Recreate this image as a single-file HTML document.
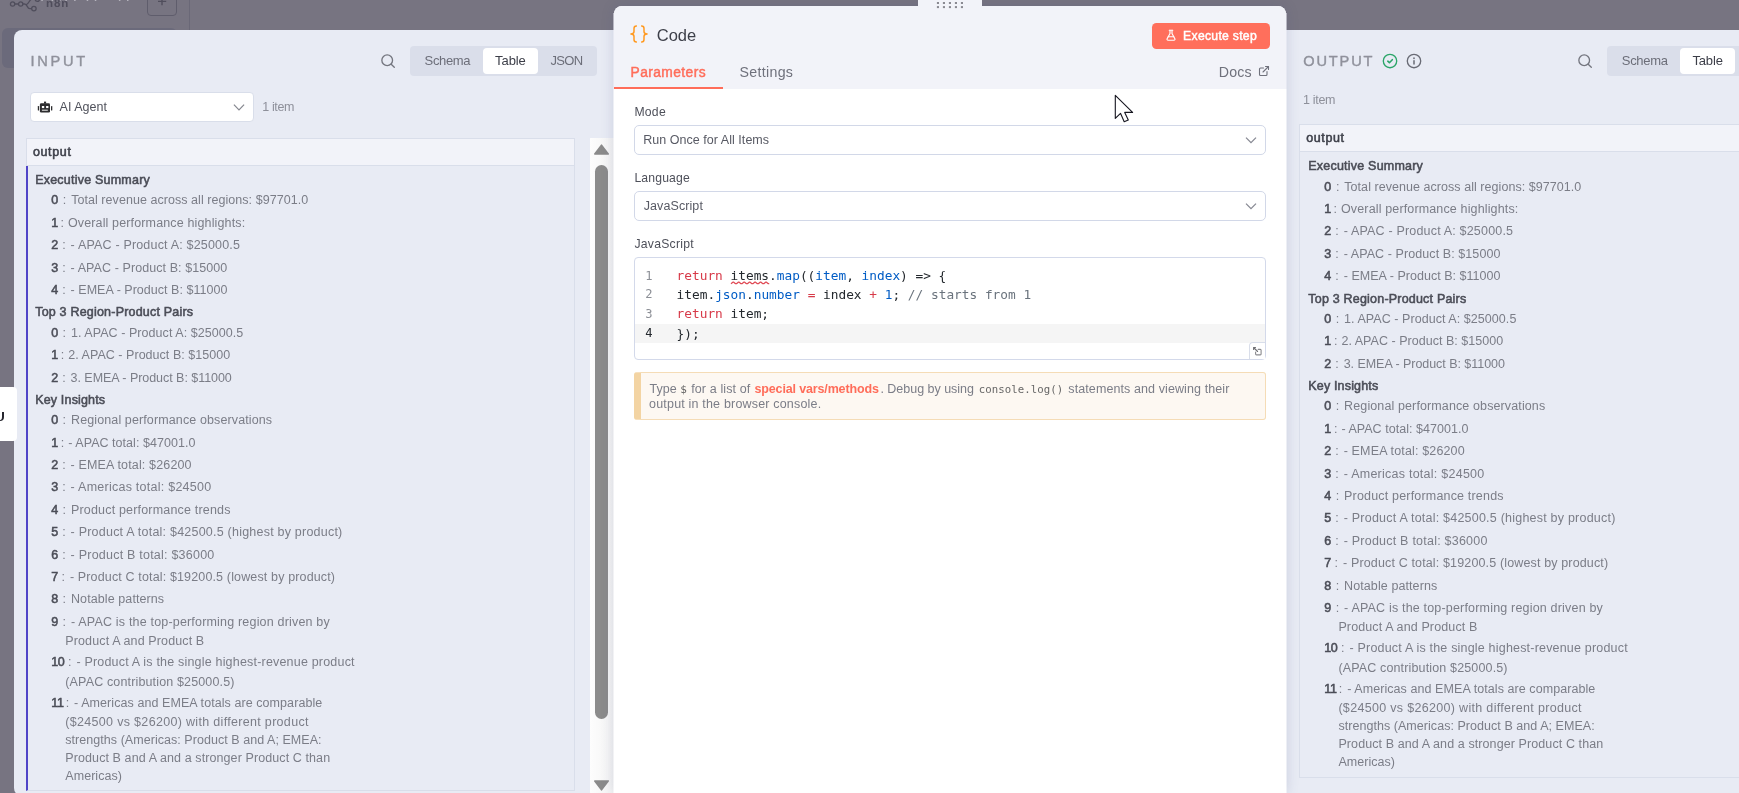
<!DOCTYPE html>
<html lang="en">
<head>
<meta charset="utf-8">
<title>n8n - Code node</title>
<style>
*{box-sizing:border-box;margin:0;padding:0}
html,body{width:1739px;height:793px;overflow:hidden}
body{background:#777481;position:relative;font-family:"Liberation Sans",sans-serif}
.a{position:absolute}
.t{position:absolute;white-space:pre}
svg{position:absolute;overflow:visible}
/* background remnants */
#sideitem{left:2px;top:28px;width:175px;height:40px;background:#6b6a7b;border-radius:6px}
#vline{left:189px;top:0;width:1px;height:30px;background:#6a6877}
#plus{left:147px;top:-10px;width:30px;height:25.5px;border:1px solid #5f5d6c;border-radius:4px}
/* panels */
#inp{left:14px;top:30px;width:620px;height:766px;background:#e8ebf4;border-radius:8px 0 0 8px}
#outp{left:1280px;top:30px;width:459px;height:763px;background:#e8ebf4}
#main{left:614px;top:6px;width:672px;height:787px;background:#fff;border-radius:8px 8px 0 0;box-shadow:0 0 13px rgba(70,80,130,.2);overflow:hidden}
#mainhead{left:0;top:0;width:100%;height:82.5px;background:#f2f3f9}
#handle{left:918px;top:0;width:64px;height:10px;background:#f2f3f9}
#uline{left:614px;top:86.7px;width:109px;height:2.2px;background:#ff6d5a}
#texts{left:0;top:0;width:1739px;height:793px;will-change:transform}
.tabs{background:#dadeea;border-radius:4px}
.tabon{background:#fff;border-radius:4px}
.sel{background:#fff;border:1px solid #d9deea;border-radius:4px}
.sel2{background:#fff;border:1px solid #d2d8e8;border-radius:5px}
.th{background:#f2f3f9;border:1px solid #d9deea}
.tb{border:1px solid #d9deea;border-top:none}
#btn{left:1152px;top:23px;width:118px;height:26px;background:#ff6f5c;border-radius:4.5px}
#hint{left:634px;top:371.7px;width:632px;height:48px;background:#fdf8f2;border:1px solid #f5dcb6;border-left:7px solid #f3d4a3;border-radius:3px}
#editor{left:634px;top:257px;width:632px;height:102.5px;background:#fff;border:1px solid #d3d9ea;border-radius:4px;overflow:hidden}
#activeline{left:0;top:66.3px;width:100%;height:18.6px;background:#f5f5f5}
</style>
</head>
<body>
<!-- dimmed canvas remnants -->
<div class="a" id="sideitem"></div>
<div class="a" id="vline"></div>
<div class="a" id="plus"></div>

<!-- INPUT panel -->
<div class="a" id="inp"></div>
<div class="a tabs" style="left:410px;top:46px;width:187px;height:29.7px"></div>
<div class="a tabon" style="left:483.1px;top:48.2px;width:54.8px;height:25.6px"></div>
<div class="a sel" style="left:30px;top:92px;width:224px;height:29.5px"></div>
<div class="a th" style="left:26px;top:138.2px;width:549px;height:27.5px"></div>
<div class="a tb" style="left:26px;top:165.7px;width:549px;height:625px;border-left:2.4px solid #5045c8"></div>
<!-- scrollbar -->
<div class="a" style="left:590px;top:138px;width:24px;height:655px;background:linear-gradient(90deg,#fdfdfd,#f3f3f3)"></div>
<div class="a" style="left:595px;top:164.8px;width:13px;height:554px;background:#8b8b8b;border-radius:6.5px"></div>
<svg style="left:593px;top:144px" width="17" height="12" viewBox="0 0 17 12"><path d="M8.5 1.2 L15.2 10 L1.8 10 Z" fill="#8b8b8b" stroke="#8b8b8b" stroke-width="1.6" stroke-linejoin="round"/></svg>
<svg style="left:593px;top:779px" width="17" height="12" viewBox="0 0 17 12"><path d="M8.5 10.8 L15.2 2 L1.8 2 Z" fill="#8b8b8b" stroke="#8b8b8b" stroke-width="1.6" stroke-linejoin="round"/></svg>

<!-- left edge tab (over input panel) -->
<div class="a" style="left:-4px;top:386.6px;width:21px;height:54px;background:#fff;border-radius:0 4px 4px 0"></div>
<div class="a" style="left:-2.6px;top:411.6px;width:6.6px;height:9.2px;border-right:2.4px solid #26262e;border-bottom:1.8px solid #26262e;border-radius:0 0 4px 0"></div>
<!-- OUTPUT panel -->
<div class="a" id="outp"></div>
<div class="a tabs" style="left:1607px;top:46px;width:187px;height:29.7px"></div>
<div class="a tabon" style="left:1680.1px;top:48.2px;width:54.8px;height:25.6px"></div>
<div class="a th" style="left:1299px;top:124px;width:460px;height:27.5px"></div>
<div class="a tb" style="left:1299px;top:151.5px;width:460px;height:626px"></div>

<!-- MAIN panel -->
<div class="a" id="main"><div class="a" id="mainhead"></div></div>
<div class="a" id="handle"></div>
<div class="a" style="left:613px;top:13px;width:1px;height:76px;background:rgba(242,243,249,.55)"></div>
<div class="a" style="left:613px;top:89px;width:1px;height:704px;background:rgba(255,255,255,.55)"></div>
<div class="a" style="left:1286px;top:13px;width:1px;height:76px;background:rgba(242,243,249,.55)"></div>
<div class="a" style="left:1286px;top:89px;width:1px;height:704px;background:rgba(255,255,255,.55)"></div>
<div class="a" id="uline"></div>
<div class="a" id="btn"></div>
<div class="a sel2" style="left:634px;top:125px;width:632px;height:29.6px"></div>
<div class="a sel2" style="left:634px;top:191px;width:632px;height:29.6px"></div>
<div class="a" id="editor"><div class="a" id="activeline"></div></div>
<div class="a" id="hint"></div>

<!-- n8n logo remnants + plus button -->
<svg style="left:0;top:0" width="200" height="16" viewBox="0 0 200 16"><g fill="none" stroke="#504e5c" stroke-width="1.3"><circle cx="12.600" cy="4" r="2.150"/><circle cx="20.700" cy="4" r="2.150"/><circle cx="33.900" cy="8.600" r="2.250"/><circle cx="37.400" cy="-.9" r="2.250"/><path d="M14.800 4h3.700M22.900 4h1.600c3.200 0 2.300 4.600 5.300 4.600h1.800M26.600 4.400c2.600-.6 2.600-5.300 5.600-5.300h3"/></g><path d="M162 -2v7.200M158 1.400h8.200" stroke="#504e5c" stroke-width="1.4" fill="none"/><g fill="#cfced6"><rect x="41.3" y="-.4" width="1.500" height="1.100"/><rect x="51.6" y="-.4" width="1.500" height="1.100"/><rect x="59.1" y="-.4" width="1.500" height="1.100"/><rect x="65.4" y="-.4" width="1.500" height="1.100"/><rect x="74.1" y="-.4" width="1.500" height="1.100"/><rect x="86.7" y="-.4" width="1.500" height="1.100"/><rect x="94.8" y="-.4" width="1.500" height="1.100"/><rect x="118.9" y="-.4" width="1.500" height="1.100"/><rect x="127.0" y="-.4" width="1.500" height="1.100"/></g></svg>
<!-- search icons -->
<svg style="left:380px;top:53px" width="17" height="17" viewBox="0 0 17 17"><g fill="none" stroke="#74767f" stroke-width="1.35" stroke-linecap="round"><circle cx="7.2" cy="7.2" r="5.35"/><path d="M11.2 11.2l3.1 3"/></g></svg>
<svg style="left:1577.2px;top:53.1px" width="17" height="17" viewBox="0 0 17 17"><g fill="none" stroke="#74767f" stroke-width="1.35" stroke-linecap="round"><circle cx="7.2" cy="7.2" r="5.35"/><path d="M11.2 11.2l3.1 3"/></g></svg>
<!-- robot -->
<svg style="left:37px;top:101px" width="16" height="13" viewBox="0 0 16 13"><g fill="#2d2d2f"><rect x="2.9" y="2.2" width="10.1" height="9.4" rx="1.3"/><rect x="7" y=".6" width="2.1" height="2"/><rect x=".8" y="5" width="1.3" height="4.6" rx=".6"/><rect x="14" y="5" width="1.3" height="4.6" rx=".6"/></g><g fill="#fff"><rect x="4.9" y="5" width="2.3" height="2.1"/><rect x="9.1" y="5" width="2.3" height="2.1"/><rect x="4.9" y="8.6" width="5.9" height="1.3" fill="#c4c4c4"/></g></svg>
<!-- chevrons -->
<svg style="left:233px;top:103px" width="12" height="8" viewBox="0 0 12 8"><path d="M.9 1.7l5.1 5.1 5.1-5.1" fill="none" stroke="#85878f" stroke-width="1.2"/></svg>
<svg style="left:1245px;top:136px" width="12" height="8" viewBox="0 0 12 8"><path d="M1 1.6l5 5.1 5-5.1" fill="none" stroke="#878993" stroke-width="1.25"/></svg>
<svg style="left:1245px;top:201.7px" width="12" height="8" viewBox="0 0 12 8"><path d="M1 1.6l5 5.1 5-5.1" fill="none" stroke="#878993" stroke-width="1.25"/></svg>
<!-- braces -->
<svg style="left:630px;top:25px" width="18" height="18" viewBox="0 0 18 18"><g fill="none" stroke="#ff9a22" stroke-width="1.5" stroke-linecap="butt" stroke-linejoin="round"><path d="M6.900 .9H6.400Q4 .9 4 3.400V6.600Q4 9 .9 9Q4 9 4 11.400V14.600Q4 17.100 6.400 17.100H6.900"/><path d="M11.100 .9H11.600Q14 .9 14 3.400V6.600Q14 9 17.100 9Q14 9 14 11.400V14.600Q14 17.100 11.600 17.100H11.100"/></g></svg>
<!-- flask -->
<svg style="left:1164.7px;top:29.4px" width="12" height="12.500" viewBox="0 0 24 24"><g fill="none" stroke="#fff" stroke-width="2.3" stroke-linecap="round" stroke-linejoin="round"><path d="M14 2v6a2 2 0 0 0 .245.960l5.510 10.080A2 2 0 0 1 18 22H6a2 2 0 0 1-1.755-2.960l5.510-10.080A2 2 0 0 0 10 8V2"/><path d="M6.453 15h11.094"/><path d="M8.500 2h7"/></g></svg>
<!-- external link -->
<svg style="left:1258px;top:65px" width="12" height="12" viewBox="0 0 24 24"><g fill="none" stroke="#6f717c" stroke-width="2.2" stroke-linecap="round" stroke-linejoin="round"><path d="M15 3h6v6"/><path d="M10 14 21 3"/><path d="M18 13v6a2 2 0 0 1-2 2H5a2 2 0 0 1-2-2V8a2 2 0 0 1 2-2h6"/></g></svg>
<!-- check + info -->
<svg style="left:1381.800px;top:53px" width="16" height="16" viewBox="0 0 16 16"><g fill="none" stroke="#2aa568" stroke-width="1.35" stroke-linecap="round" stroke-linejoin="round"><circle cx="8" cy="8" r="6.7"/><path d="M5.800 8.200l1.600 1.500 2.900-3" stroke-width="1.600"/></g></svg>
<svg style="left:1405.800px;top:53px" width="16" height="16" viewBox="0 0 16 16"><g fill="none" stroke="#696b75" stroke-width="1.35" stroke-linecap="round"><circle cx="8" cy="8" r="6.7"/><path d="M8 7.700v3.300" stroke-width="1.500"/><path d="M8 5.200v.1" stroke-width="1.700"/></g></svg>
<!-- editor corner button -->
<div class="a" style="left:1248.800px;top:342.300px;width:16.500px;height:16.500px;background:#fff;border:1px solid #d9deea;border-right:none;border-bottom:none;border-radius:4px 0 0 0"></div>
<svg style="left:1252px;top:346px" width="11" height="11" viewBox="0 0 11 11"><g fill="none" stroke="#8a8a8e" stroke-width="1.100" stroke-linecap="round" stroke-linejoin="round"><path d="M6.200 3.400h2.100a.8.800 0 0 1 .8.800v3.900a.8.800 0 0 1-.8.800H4.400a.8.800 0 0 1-.8-.8V6"/><path d="M1.600 1.500l4 4M1.600 3.400V1.500h1.900" stroke="#707074"/></g></svg>
<!-- drag handle dots -->
<svg style="left:936px;top:1px" width="30" height="8" viewBox="0 0 30 8"><g fill="#8a8a92"><rect x=".9" y="1" width="2.100" height="2"/><rect x="6.900" y="1" width="2.100" height="2"/><rect x="12.900" y="1" width="2.100" height="2"/><rect x="18.900" y="1" width="2.100" height="2"/><rect x="24.900" y="1" width="2.100" height="2"/><rect x=".9" y="5.100" width="2.100" height="2"/><rect x="6.900" y="5.100" width="2.100" height="2"/><rect x="12.900" y="5.100" width="2.100" height="2"/><rect x="18.900" y="5.100" width="2.100" height="2"/><rect x="24.900" y="5.100" width="2.100" height="2"/></g></svg>
<!-- mouse cursor -->
<svg style="left:1113.300px;top:93.300px" width="24" height="32" viewBox="0 0 24 32"><path d="M2.300 2.300V25.400L7.500 20.300 11.200 28.700 15.300 27 11.700 19.400 19.600 19.400Z" fill="#fff" stroke="#15151f" stroke-width="1.100" stroke-linejoin="round"/></svg>
<!-- lint squiggle -->
<svg style="left:0;top:0" width="1739" height="793"><path d="M731 283.7 l1.82 -1.5 l0.91 0 l1.82 1.5 l0.91 0 l1.82 -1.5 l0.91 0 l1.82 1.5 l0.91 0 l1.82 -1.5 l0.91 0 l1.82 1.5 l0.91 0 l1.82 -1.5 l0.91 0 l1.82 1.5 l0.91 0 l1.82 -1.5 l0.91 0 l1.82 1.5 l0.91 0 l1.82 -1.5 l0.91 0 l1.82 1.5 l0.91 0 l1.82 -1.5 l0.91 0 l1.82 1.5 l0.91 0" fill="none" stroke="#e04a55" stroke-width="1.25" stroke-linejoin="round"/></svg>

<div class="a" id="texts">
<div class="t" style="left:35.20px;top:172.77px;font:400 12.5px/15px 'Liberation Sans',sans-serif;color:#4b4d57;letter-spacing:0.214px;-webkit-text-stroke:.55px #4b4d57;">Executive Summary</div>
<div class="t" style="left:51.20px;top:192.77px;font:400 12.5px/15px 'Liberation Sans',sans-serif;color:#4b4d57;-webkit-text-stroke:.55px #4b4d57;">0</div>
<div class="t" style="left:62.80px;top:192.77px;font:400 12.5px/15px 'Liberation Sans',sans-serif;color:#7b7d87;">:</div>
<div class="t" style="left:71.20px;top:192.77px;font:400 12.5px/15px 'Liberation Sans',sans-serif;color:#7b7d87;letter-spacing:0.051px;">Total revenue across all regions: $97701.0</div>
<div class="t" style="left:51.20px;top:215.77px;font:400 12.5px/15px 'Liberation Sans',sans-serif;color:#4b4d57;-webkit-text-stroke:.55px #4b4d57;">1</div>
<div class="t" style="left:60.40px;top:215.77px;font:400 12.5px/15px 'Liberation Sans',sans-serif;color:#7b7d87;">:</div>
<div class="t" style="left:67.90px;top:215.77px;font:400 12.5px/15px 'Liberation Sans',sans-serif;color:#7b7d87;letter-spacing:0.142px;">Overall performance highlights:</div>
<div class="t" style="left:51.20px;top:237.77px;font:400 12.5px/15px 'Liberation Sans',sans-serif;color:#4b4d57;-webkit-text-stroke:.55px #4b4d57;">2</div>
<div class="t" style="left:62.20px;top:237.77px;font:400 12.5px/15px 'Liberation Sans',sans-serif;color:#7b7d87;">:</div>
<div class="t" style="left:70.60px;top:237.77px;font:400 12.5px/15px 'Liberation Sans',sans-serif;color:#7b7d87;letter-spacing:0.180px;">- APAC - Product A: $25000.5</div>
<div class="t" style="left:51.20px;top:260.77px;font:400 12.5px/15px 'Liberation Sans',sans-serif;color:#4b4d57;-webkit-text-stroke:.55px #4b4d57;">3</div>
<div class="t" style="left:62.20px;top:260.77px;font:400 12.5px/15px 'Liberation Sans',sans-serif;color:#7b7d87;">:</div>
<div class="t" style="left:70.60px;top:260.77px;font:400 12.5px/15px 'Liberation Sans',sans-serif;color:#7b7d87;letter-spacing:0.080px;">- APAC - Product B: $15000</div>
<div class="t" style="left:51.20px;top:282.77px;font:400 12.5px/15px 'Liberation Sans',sans-serif;color:#4b4d57;-webkit-text-stroke:.55px #4b4d57;">4</div>
<div class="t" style="left:62.20px;top:282.77px;font:400 12.5px/15px 'Liberation Sans',sans-serif;color:#7b7d87;">:</div>
<div class="t" style="left:70.60px;top:282.77px;font:400 12.5px/15px 'Liberation Sans',sans-serif;color:#7b7d87;letter-spacing:0.027px;">- EMEA - Product B: $11000</div>
<div class="t" style="left:35.20px;top:304.77px;font:400 12.5px/15px 'Liberation Sans',sans-serif;color:#4b4d57;letter-spacing:0.202px;-webkit-text-stroke:.55px #4b4d57;">Top 3 Region-Product Pairs</div>
<div class="t" style="left:51.20px;top:325.77px;font:400 12.5px/15px 'Liberation Sans',sans-serif;color:#4b4d57;-webkit-text-stroke:.55px #4b4d57;">0</div>
<div class="t" style="left:62.60px;top:325.77px;font:400 12.5px/15px 'Liberation Sans',sans-serif;color:#7b7d87;">:</div>
<div class="t" style="left:71.00px;top:325.77px;font:400 12.5px/15px 'Liberation Sans',sans-serif;color:#7b7d87;letter-spacing:0.055px;">1. APAC - Product A: $25000.5</div>
<div class="t" style="left:51.20px;top:347.77px;font:400 12.5px/15px 'Liberation Sans',sans-serif;color:#4b4d57;-webkit-text-stroke:.55px #4b4d57;">1</div>
<div class="t" style="left:60.80px;top:347.77px;font:400 12.5px/15px 'Liberation Sans',sans-serif;color:#7b7d87;">:</div>
<div class="t" style="left:68.30px;top:347.77px;font:400 12.5px/15px 'Liberation Sans',sans-serif;color:#7b7d87;letter-spacing:0.034px;">2. APAC - Product B: $15000</div>
<div class="t" style="left:51.20px;top:370.77px;font:400 12.5px/15px 'Liberation Sans',sans-serif;color:#4b4d57;-webkit-text-stroke:.55px #4b4d57;">2</div>
<div class="t" style="left:62.20px;top:370.77px;font:400 12.5px/15px 'Liberation Sans',sans-serif;color:#7b7d87;">:</div>
<div class="t" style="left:70.60px;top:370.77px;font:400 12.5px/15px 'Liberation Sans',sans-serif;color:#7b7d87;letter-spacing:-0.044px;">3. EMEA - Product B: $11000</div>
<div class="t" style="left:35.20px;top:392.77px;font:400 12.5px/15px 'Liberation Sans',sans-serif;color:#4b4d57;letter-spacing:0.167px;-webkit-text-stroke:.55px #4b4d57;">Key Insights</div>
<div class="t" style="left:51.20px;top:412.77px;font:400 12.5px/15px 'Liberation Sans',sans-serif;color:#4b4d57;-webkit-text-stroke:.55px #4b4d57;">0</div>
<div class="t" style="left:62.60px;top:412.77px;font:400 12.5px/15px 'Liberation Sans',sans-serif;color:#7b7d87;">:</div>
<div class="t" style="left:71.00px;top:412.77px;font:400 12.5px/15px 'Liberation Sans',sans-serif;color:#7b7d87;letter-spacing:0.117px;">Regional performance observations</div>
<div class="t" style="left:51.20px;top:435.77px;font:400 12.5px/15px 'Liberation Sans',sans-serif;color:#4b4d57;-webkit-text-stroke:.55px #4b4d57;">1</div>
<div class="t" style="left:60.80px;top:435.77px;font:400 12.5px/15px 'Liberation Sans',sans-serif;color:#7b7d87;">:</div>
<div class="t" style="left:68.30px;top:435.77px;font:400 12.5px/15px 'Liberation Sans',sans-serif;color:#7b7d87;letter-spacing:0.039px;">- APAC total: $47001.0</div>
<div class="t" style="left:51.20px;top:457.77px;font:400 12.5px/15px 'Liberation Sans',sans-serif;color:#4b4d57;-webkit-text-stroke:.55px #4b4d57;">2</div>
<div class="t" style="left:62.20px;top:457.77px;font:400 12.5px/15px 'Liberation Sans',sans-serif;color:#7b7d87;">:</div>
<div class="t" style="left:70.60px;top:457.77px;font:400 12.5px/15px 'Liberation Sans',sans-serif;color:#7b7d87;letter-spacing:0.148px;">- EMEA total: $26200</div>
<div class="t" style="left:51.20px;top:479.77px;font:400 12.5px/15px 'Liberation Sans',sans-serif;color:#4b4d57;-webkit-text-stroke:.55px #4b4d57;">3</div>
<div class="t" style="left:62.20px;top:479.77px;font:400 12.5px/15px 'Liberation Sans',sans-serif;color:#7b7d87;">:</div>
<div class="t" style="left:70.60px;top:479.77px;font:400 12.5px/15px 'Liberation Sans',sans-serif;color:#7b7d87;letter-spacing:0.250px;">- Americas total: $24500</div>
<div class="t" style="left:51.20px;top:502.77px;font:400 12.5px/15px 'Liberation Sans',sans-serif;color:#4b4d57;-webkit-text-stroke:.55px #4b4d57;">4</div>
<div class="t" style="left:62.60px;top:502.77px;font:400 12.5px/15px 'Liberation Sans',sans-serif;color:#7b7d87;">:</div>
<div class="t" style="left:71.00px;top:502.77px;font:400 12.5px/15px 'Liberation Sans',sans-serif;color:#7b7d87;letter-spacing:0.179px;">Product performance trends</div>
<div class="t" style="left:51.20px;top:524.77px;font:400 12.5px/15px 'Liberation Sans',sans-serif;color:#4b4d57;-webkit-text-stroke:.55px #4b4d57;">5</div>
<div class="t" style="left:62.20px;top:524.77px;font:400 12.5px/15px 'Liberation Sans',sans-serif;color:#7b7d87;">:</div>
<div class="t" style="left:70.60px;top:524.77px;font:400 12.5px/15px 'Liberation Sans',sans-serif;color:#7b7d87;letter-spacing:0.221px;">- Product A total: $42500.5 (highest by product)</div>
<div class="t" style="left:51.20px;top:547.77px;font:400 12.5px/15px 'Liberation Sans',sans-serif;color:#4b4d57;-webkit-text-stroke:.55px #4b4d57;">6</div>
<div class="t" style="left:62.20px;top:547.77px;font:400 12.5px/15px 'Liberation Sans',sans-serif;color:#7b7d87;">:</div>
<div class="t" style="left:70.60px;top:547.77px;font:400 12.5px/15px 'Liberation Sans',sans-serif;color:#7b7d87;letter-spacing:0.225px;">- Product B total: $36000</div>
<div class="t" style="left:51.20px;top:569.77px;font:400 12.5px/15px 'Liberation Sans',sans-serif;color:#4b4d57;-webkit-text-stroke:.55px #4b4d57;">7</div>
<div class="t" style="left:61.50px;top:569.77px;font:400 12.5px/15px 'Liberation Sans',sans-serif;color:#7b7d87;">:</div>
<div class="t" style="left:69.90px;top:569.77px;font:400 12.5px/15px 'Liberation Sans',sans-serif;color:#7b7d87;letter-spacing:0.145px;">- Product C total: $19200.5 (lowest by product)</div>
<div class="t" style="left:51.20px;top:591.77px;font:400 12.5px/15px 'Liberation Sans',sans-serif;color:#4b4d57;-webkit-text-stroke:.55px #4b4d57;">8</div>
<div class="t" style="left:62.60px;top:591.77px;font:400 12.5px/15px 'Liberation Sans',sans-serif;color:#7b7d87;">:</div>
<div class="t" style="left:71.00px;top:591.77px;font:400 12.5px/15px 'Liberation Sans',sans-serif;color:#7b7d87;letter-spacing:0.092px;">Notable patterns</div>
<div class="t" style="left:51.20px;top:614.77px;font:400 12.5px/15px 'Liberation Sans',sans-serif;color:#4b4d57;-webkit-text-stroke:.55px #4b4d57;">9</div>
<div class="t" style="left:62.60px;top:614.77px;font:400 12.5px/15px 'Liberation Sans',sans-serif;color:#7b7d87;">:</div>
<div class="t" style="left:71.00px;top:614.77px;font:400 12.5px/15px 'Liberation Sans',sans-serif;color:#7b7d87;letter-spacing:0.185px;">- APAC is the top-performing region driven by</div>
<div class="t" style="left:65.30px;top:633.77px;font:400 12.5px/15px 'Liberation Sans',sans-serif;color:#7b7d87;letter-spacing:0.122px;">Product A and Product B</div>
<div class="t" style="left:51.20px;top:654.77px;font:400 12.5px/15px 'Liberation Sans',sans-serif;color:#4b4d57;letter-spacing:-0.453px;-webkit-text-stroke:.55px #4b4d57;">10</div>
<div class="t" style="left:68.00px;top:654.77px;font:400 12.5px/15px 'Liberation Sans',sans-serif;color:#7b7d87;">:</div>
<div class="t" style="left:76.40px;top:654.77px;font:400 12.5px/15px 'Liberation Sans',sans-serif;color:#7b7d87;letter-spacing:0.193px;">- Product A is the single highest-revenue product</div>
<div class="t" style="left:65.30px;top:674.77px;font:400 12.5px/15px 'Liberation Sans',sans-serif;color:#7b7d87;letter-spacing:0.148px;">(APAC contribution $25000.5)</div>
<div class="t" style="left:51.20px;top:695.77px;font:400 12.5px/15px 'Liberation Sans',sans-serif;color:#4b4d57;letter-spacing:-0.292px;-webkit-text-stroke:.55px #4b4d57;">11</div>
<div class="t" style="left:65.70px;top:695.77px;font:400 12.5px/15px 'Liberation Sans',sans-serif;color:#7b7d87;">:</div>
<div class="t" style="left:74.10px;top:695.77px;font:400 12.5px/15px 'Liberation Sans',sans-serif;color:#7b7d87;letter-spacing:0.072px;">- Americas and EMEA totals are comparable</div>
<div class="t" style="left:65.30px;top:714.77px;font:400 12.5px/15px 'Liberation Sans',sans-serif;color:#7b7d87;letter-spacing:0.317px;">($24500 vs $26200) with different product</div>
<div class="t" style="left:65.30px;top:732.77px;font:400 12.5px/15px 'Liberation Sans',sans-serif;color:#7b7d87;letter-spacing:0.047px;">strengths (Americas: Product B and A; EMEA:</div>
<div class="t" style="left:65.30px;top:750.77px;font:400 12.5px/15px 'Liberation Sans',sans-serif;color:#7b7d87;letter-spacing:0.096px;">Product B and A and a stronger Product C than</div>
<div class="t" style="left:65.30px;top:768.77px;font:400 12.5px/15px 'Liberation Sans',sans-serif;color:#7b7d87;letter-spacing:0.048px;">Americas)</div>
<div class="t" style="left:1308.30px;top:158.77px;font:400 12.5px/15px 'Liberation Sans',sans-serif;color:#4b4d57;letter-spacing:0.214px;-webkit-text-stroke:.55px #4b4d57;">Executive Summary</div>
<div class="t" style="left:1324.30px;top:179.77px;font:400 12.5px/15px 'Liberation Sans',sans-serif;color:#4b4d57;-webkit-text-stroke:.55px #4b4d57;">0</div>
<div class="t" style="left:1335.90px;top:179.77px;font:400 12.5px/15px 'Liberation Sans',sans-serif;color:#7b7d87;">:</div>
<div class="t" style="left:1344.30px;top:179.77px;font:400 12.5px/15px 'Liberation Sans',sans-serif;color:#7b7d87;letter-spacing:0.051px;">Total revenue across all regions: $97701.0</div>
<div class="t" style="left:1324.30px;top:201.77px;font:400 12.5px/15px 'Liberation Sans',sans-serif;color:#4b4d57;-webkit-text-stroke:.55px #4b4d57;">1</div>
<div class="t" style="left:1333.50px;top:201.77px;font:400 12.5px/15px 'Liberation Sans',sans-serif;color:#7b7d87;">:</div>
<div class="t" style="left:1341.00px;top:201.77px;font:400 12.5px/15px 'Liberation Sans',sans-serif;color:#7b7d87;letter-spacing:0.142px;">Overall performance highlights:</div>
<div class="t" style="left:1324.30px;top:223.77px;font:400 12.5px/15px 'Liberation Sans',sans-serif;color:#4b4d57;-webkit-text-stroke:.55px #4b4d57;">2</div>
<div class="t" style="left:1335.30px;top:223.77px;font:400 12.5px/15px 'Liberation Sans',sans-serif;color:#7b7d87;">:</div>
<div class="t" style="left:1343.70px;top:223.77px;font:400 12.5px/15px 'Liberation Sans',sans-serif;color:#7b7d87;letter-spacing:0.180px;">- APAC - Product A: $25000.5</div>
<div class="t" style="left:1324.30px;top:246.77px;font:400 12.5px/15px 'Liberation Sans',sans-serif;color:#4b4d57;-webkit-text-stroke:.55px #4b4d57;">3</div>
<div class="t" style="left:1335.30px;top:246.77px;font:400 12.5px/15px 'Liberation Sans',sans-serif;color:#7b7d87;">:</div>
<div class="t" style="left:1343.70px;top:246.77px;font:400 12.5px/15px 'Liberation Sans',sans-serif;color:#7b7d87;letter-spacing:0.080px;">- APAC - Product B: $15000</div>
<div class="t" style="left:1324.30px;top:268.77px;font:400 12.5px/15px 'Liberation Sans',sans-serif;color:#4b4d57;-webkit-text-stroke:.55px #4b4d57;">4</div>
<div class="t" style="left:1335.30px;top:268.77px;font:400 12.5px/15px 'Liberation Sans',sans-serif;color:#7b7d87;">:</div>
<div class="t" style="left:1343.70px;top:268.77px;font:400 12.5px/15px 'Liberation Sans',sans-serif;color:#7b7d87;letter-spacing:0.027px;">- EMEA - Product B: $11000</div>
<div class="t" style="left:1308.30px;top:291.77px;font:400 12.5px/15px 'Liberation Sans',sans-serif;color:#4b4d57;letter-spacing:0.202px;-webkit-text-stroke:.55px #4b4d57;">Top 3 Region-Product Pairs</div>
<div class="t" style="left:1324.30px;top:311.77px;font:400 12.5px/15px 'Liberation Sans',sans-serif;color:#4b4d57;-webkit-text-stroke:.55px #4b4d57;">0</div>
<div class="t" style="left:1335.70px;top:311.77px;font:400 12.5px/15px 'Liberation Sans',sans-serif;color:#7b7d87;">:</div>
<div class="t" style="left:1344.10px;top:311.77px;font:400 12.5px/15px 'Liberation Sans',sans-serif;color:#7b7d87;letter-spacing:0.055px;">1. APAC - Product A: $25000.5</div>
<div class="t" style="left:1324.30px;top:333.77px;font:400 12.5px/15px 'Liberation Sans',sans-serif;color:#4b4d57;-webkit-text-stroke:.55px #4b4d57;">1</div>
<div class="t" style="left:1333.90px;top:333.77px;font:400 12.5px/15px 'Liberation Sans',sans-serif;color:#7b7d87;">:</div>
<div class="t" style="left:1341.40px;top:333.77px;font:400 12.5px/15px 'Liberation Sans',sans-serif;color:#7b7d87;letter-spacing:0.034px;">2. APAC - Product B: $15000</div>
<div class="t" style="left:1324.30px;top:356.77px;font:400 12.5px/15px 'Liberation Sans',sans-serif;color:#4b4d57;-webkit-text-stroke:.55px #4b4d57;">2</div>
<div class="t" style="left:1335.30px;top:356.77px;font:400 12.5px/15px 'Liberation Sans',sans-serif;color:#7b7d87;">:</div>
<div class="t" style="left:1343.70px;top:356.77px;font:400 12.5px/15px 'Liberation Sans',sans-serif;color:#7b7d87;letter-spacing:-0.044px;">3. EMEA - Product B: $11000</div>
<div class="t" style="left:1308.30px;top:378.77px;font:400 12.5px/15px 'Liberation Sans',sans-serif;color:#4b4d57;letter-spacing:0.167px;-webkit-text-stroke:.55px #4b4d57;">Key Insights</div>
<div class="t" style="left:1324.30px;top:398.77px;font:400 12.5px/15px 'Liberation Sans',sans-serif;color:#4b4d57;-webkit-text-stroke:.55px #4b4d57;">0</div>
<div class="t" style="left:1335.70px;top:398.77px;font:400 12.5px/15px 'Liberation Sans',sans-serif;color:#7b7d87;">:</div>
<div class="t" style="left:1344.10px;top:398.77px;font:400 12.5px/15px 'Liberation Sans',sans-serif;color:#7b7d87;letter-spacing:0.117px;">Regional performance observations</div>
<div class="t" style="left:1324.30px;top:421.77px;font:400 12.5px/15px 'Liberation Sans',sans-serif;color:#4b4d57;-webkit-text-stroke:.55px #4b4d57;">1</div>
<div class="t" style="left:1333.90px;top:421.77px;font:400 12.5px/15px 'Liberation Sans',sans-serif;color:#7b7d87;">:</div>
<div class="t" style="left:1341.40px;top:421.77px;font:400 12.5px/15px 'Liberation Sans',sans-serif;color:#7b7d87;letter-spacing:0.039px;">- APAC total: $47001.0</div>
<div class="t" style="left:1324.30px;top:443.77px;font:400 12.5px/15px 'Liberation Sans',sans-serif;color:#4b4d57;-webkit-text-stroke:.55px #4b4d57;">2</div>
<div class="t" style="left:1335.30px;top:443.77px;font:400 12.5px/15px 'Liberation Sans',sans-serif;color:#7b7d87;">:</div>
<div class="t" style="left:1343.70px;top:443.77px;font:400 12.5px/15px 'Liberation Sans',sans-serif;color:#7b7d87;letter-spacing:0.148px;">- EMEA total: $26200</div>
<div class="t" style="left:1324.30px;top:466.77px;font:400 12.5px/15px 'Liberation Sans',sans-serif;color:#4b4d57;-webkit-text-stroke:.55px #4b4d57;">3</div>
<div class="t" style="left:1335.30px;top:466.77px;font:400 12.5px/15px 'Liberation Sans',sans-serif;color:#7b7d87;">:</div>
<div class="t" style="left:1343.70px;top:466.77px;font:400 12.5px/15px 'Liberation Sans',sans-serif;color:#7b7d87;letter-spacing:0.250px;">- Americas total: $24500</div>
<div class="t" style="left:1324.30px;top:488.77px;font:400 12.5px/15px 'Liberation Sans',sans-serif;color:#4b4d57;-webkit-text-stroke:.55px #4b4d57;">4</div>
<div class="t" style="left:1335.70px;top:488.77px;font:400 12.5px/15px 'Liberation Sans',sans-serif;color:#7b7d87;">:</div>
<div class="t" style="left:1344.10px;top:488.77px;font:400 12.5px/15px 'Liberation Sans',sans-serif;color:#7b7d87;letter-spacing:0.179px;">Product performance trends</div>
<div class="t" style="left:1324.30px;top:510.77px;font:400 12.5px/15px 'Liberation Sans',sans-serif;color:#4b4d57;-webkit-text-stroke:.55px #4b4d57;">5</div>
<div class="t" style="left:1335.30px;top:510.77px;font:400 12.5px/15px 'Liberation Sans',sans-serif;color:#7b7d87;">:</div>
<div class="t" style="left:1343.70px;top:510.77px;font:400 12.5px/15px 'Liberation Sans',sans-serif;color:#7b7d87;letter-spacing:0.221px;">- Product A total: $42500.5 (highest by product)</div>
<div class="t" style="left:1324.30px;top:533.77px;font:400 12.5px/15px 'Liberation Sans',sans-serif;color:#4b4d57;-webkit-text-stroke:.55px #4b4d57;">6</div>
<div class="t" style="left:1335.30px;top:533.77px;font:400 12.5px/15px 'Liberation Sans',sans-serif;color:#7b7d87;">:</div>
<div class="t" style="left:1343.70px;top:533.77px;font:400 12.5px/15px 'Liberation Sans',sans-serif;color:#7b7d87;letter-spacing:0.225px;">- Product B total: $36000</div>
<div class="t" style="left:1324.30px;top:555.77px;font:400 12.5px/15px 'Liberation Sans',sans-serif;color:#4b4d57;-webkit-text-stroke:.55px #4b4d57;">7</div>
<div class="t" style="left:1334.60px;top:555.77px;font:400 12.5px/15px 'Liberation Sans',sans-serif;color:#7b7d87;">:</div>
<div class="t" style="left:1343.00px;top:555.77px;font:400 12.5px/15px 'Liberation Sans',sans-serif;color:#7b7d87;letter-spacing:0.145px;">- Product C total: $19200.5 (lowest by product)</div>
<div class="t" style="left:1324.30px;top:578.77px;font:400 12.5px/15px 'Liberation Sans',sans-serif;color:#4b4d57;-webkit-text-stroke:.55px #4b4d57;">8</div>
<div class="t" style="left:1335.70px;top:578.77px;font:400 12.5px/15px 'Liberation Sans',sans-serif;color:#7b7d87;">:</div>
<div class="t" style="left:1344.10px;top:578.77px;font:400 12.5px/15px 'Liberation Sans',sans-serif;color:#7b7d87;letter-spacing:0.092px;">Notable patterns</div>
<div class="t" style="left:1324.30px;top:600.77px;font:400 12.5px/15px 'Liberation Sans',sans-serif;color:#4b4d57;-webkit-text-stroke:.55px #4b4d57;">9</div>
<div class="t" style="left:1335.70px;top:600.77px;font:400 12.5px/15px 'Liberation Sans',sans-serif;color:#7b7d87;">:</div>
<div class="t" style="left:1344.10px;top:600.77px;font:400 12.5px/15px 'Liberation Sans',sans-serif;color:#7b7d87;letter-spacing:0.185px;">- APAC is the top-performing region driven by</div>
<div class="t" style="left:1338.40px;top:619.77px;font:400 12.5px/15px 'Liberation Sans',sans-serif;color:#7b7d87;letter-spacing:0.122px;">Product A and Product B</div>
<div class="t" style="left:1324.30px;top:640.77px;font:400 12.5px/15px 'Liberation Sans',sans-serif;color:#4b4d57;letter-spacing:-0.453px;-webkit-text-stroke:.55px #4b4d57;">10</div>
<div class="t" style="left:1341.10px;top:640.77px;font:400 12.5px/15px 'Liberation Sans',sans-serif;color:#7b7d87;">:</div>
<div class="t" style="left:1349.50px;top:640.77px;font:400 12.5px/15px 'Liberation Sans',sans-serif;color:#7b7d87;letter-spacing:0.193px;">- Product A is the single highest-revenue product</div>
<div class="t" style="left:1338.40px;top:660.77px;font:400 12.5px/15px 'Liberation Sans',sans-serif;color:#7b7d87;letter-spacing:0.148px;">(APAC contribution $25000.5)</div>
<div class="t" style="left:1324.30px;top:681.77px;font:400 12.5px/15px 'Liberation Sans',sans-serif;color:#4b4d57;letter-spacing:-0.292px;-webkit-text-stroke:.55px #4b4d57;">11</div>
<div class="t" style="left:1338.80px;top:681.77px;font:400 12.5px/15px 'Liberation Sans',sans-serif;color:#7b7d87;">:</div>
<div class="t" style="left:1347.20px;top:681.77px;font:400 12.5px/15px 'Liberation Sans',sans-serif;color:#7b7d87;letter-spacing:0.072px;">- Americas and EMEA totals are comparable</div>
<div class="t" style="left:1338.40px;top:700.77px;font:400 12.5px/15px 'Liberation Sans',sans-serif;color:#7b7d87;letter-spacing:0.317px;">($24500 vs $26200) with different product</div>
<div class="t" style="left:1338.40px;top:718.77px;font:400 12.5px/15px 'Liberation Sans',sans-serif;color:#7b7d87;letter-spacing:0.047px;">strengths (Americas: Product B and A; EMEA:</div>
<div class="t" style="left:1338.40px;top:736.77px;font:400 12.5px/15px 'Liberation Sans',sans-serif;color:#7b7d87;letter-spacing:0.096px;">Product B and A and a stronger Product C than</div>
<div class="t" style="left:1338.40px;top:754.77px;font:400 12.5px/15px 'Liberation Sans',sans-serif;color:#7b7d87;letter-spacing:0.048px;">Americas)</div>
<div class="t" style="left:32.90px;top:144.57px;font:400 12.5px/15px 'Liberation Sans',sans-serif;color:#3e404a;letter-spacing:0.656px;-webkit-text-stroke:.55px #3e404a;">output</div>
<div class="t" style="left:1306.20px;top:130.57px;font:400 12.5px/15px 'Liberation Sans',sans-serif;color:#3e404a;letter-spacing:0.622px;-webkit-text-stroke:.55px #3e404a;">output</div>
<div class="t" style="left:30.40px;top:52.24px;font:400 14.6px/18px 'Liberation Sans',sans-serif;color:#8f919b;letter-spacing:2.764px;-webkit-text-stroke:.4px #8f919b;">INPUT</div>
<div class="t" style="left:1303.20px;top:51.84px;font:400 14.6px/18px 'Liberation Sans',sans-serif;color:#8f919b;letter-spacing:1.867px;-webkit-text-stroke:.4px #8f919b;">OUTPUT</div>
<div class="t" style="left:424.60px;top:53.20px;font:400 13px/16px 'Liberation Sans',sans-serif;color:#6c6e79;letter-spacing:-0.351px;">Schema</div>
<div class="t" style="left:495.10px;top:53.20px;font:400 13px/16px 'Liberation Sans',sans-serif;color:#3c3e48;letter-spacing:-0.096px;">Table</div>
<div class="t" style="left:550.40px;top:53.20px;font:400 13px/16px 'Liberation Sans',sans-serif;color:#6c6e79;letter-spacing:-0.643px;">JSON</div>
<div class="t" style="left:1621.80px;top:53.10px;font:400 13px/16px 'Liberation Sans',sans-serif;color:#6c6e79;letter-spacing:-0.317px;">Schema</div>
<div class="t" style="left:1692.40px;top:53.10px;font:400 13px/16px 'Liberation Sans',sans-serif;color:#3c3e48;letter-spacing:-0.136px;">Table</div>
<div class="t" style="left:59.50px;top:100.27px;font:400 12.5px/15px 'Liberation Sans',sans-serif;color:#50525c;letter-spacing:0.042px;">AI Agent</div>
<div class="t" style="left:262.20px;top:100.27px;font:400 12.5px/15px 'Liberation Sans',sans-serif;color:#8e909a;letter-spacing:-0.358px;">1 item</div>
<div class="t" style="left:1303.00px;top:92.67px;font:400 12.5px/15px 'Liberation Sans',sans-serif;color:#8e909a;letter-spacing:-0.324px;">1 item</div>
<div class="t" style="left:656.70px;top:24.78px;font:400 16.5px/20px 'Liberation Sans',sans-serif;color:#3d3f49;letter-spacing:0.037px;">Code</div>
<div class="t" style="left:630.60px;top:64.22px;font:400 13.8px/17px 'Liberation Sans',sans-serif;color:#ff6d5a;letter-spacing:0.409px;-webkit-text-stroke:.45px #ff6d5a;">Parameters</div>
<div class="t" style="left:739.40px;top:64.08px;font:400 14.2px/17px 'Liberation Sans',sans-serif;color:#6f717c;letter-spacing:0.329px;">Settings</div>
<div class="t" style="left:1218.80px;top:64.08px;font:400 14.2px/17px 'Liberation Sans',sans-serif;color:#6f717c;letter-spacing:0.193px;">Docs</div>
<div class="t" style="left:1183.10px;top:28.77px;font:400 12.2px/15px 'Liberation Sans',sans-serif;color:#ffffff;letter-spacing:0.286px;-webkit-text-stroke:.45px #fff;">Execute step</div>
<div class="t" style="left:634.40px;top:104.67px;font:400 12.2px/15px 'Liberation Sans',sans-serif;color:#4e505a;letter-spacing:0.275px;">Mode</div>
<div class="t" style="left:643.30px;top:132.67px;font:400 12.5px/15px 'Liberation Sans',sans-serif;color:#585a64;letter-spacing:0.034px;">Run Once for All Items</div>
<div class="t" style="left:634.40px;top:170.97px;font:400 12.2px/15px 'Liberation Sans',sans-serif;color:#4e505a;letter-spacing:0.158px;">Language</div>
<div class="t" style="left:643.70px;top:198.57px;font:400 12.5px/15px 'Liberation Sans',sans-serif;color:#585a64;letter-spacing:0.094px;">JavaScript</div>
<div class="t" style="left:634.40px;top:237.17px;font:400 12.2px/15px 'Liberation Sans',sans-serif;color:#4e505a;letter-spacing:0.269px;">JavaScript</div>
<div class="t" style="left:676.60px;top:268.36px;font:400 12.8px/15px 'DejaVu Sans Mono','Liberation Mono',monospace;color:#24292e;"><span style="color:#d73a49">return</span> items.<span style="color:#005cc5">map</span>((<span style="color:#005cc5">item</span>, <span style="color:#005cc5">index</span>) =&gt; {</div>
<div class="t" style="left:645.30px;top:268.61px;font:400 12.100000000000001px/15px 'DejaVu Sans Mono','Liberation Mono',monospace;color:#8c8f96;">1</div>
<div class="t" style="left:676.60px;top:286.66px;font:400 12.8px/15px 'DejaVu Sans Mono','Liberation Mono',monospace;color:#24292e;">item.<span style="color:#005cc5">json</span>.<span style="color:#005cc5">number</span> <span style="color:#d73a49">=</span> index <span style="color:#d73a49">+</span> <span style="color:#005cc5">1</span>; <span style="color:#6a737d">// starts from 1</span></div>
<div class="t" style="left:645.30px;top:286.91px;font:400 12.100000000000001px/15px 'DejaVu Sans Mono','Liberation Mono',monospace;color:#8c8f96;">2</div>
<div class="t" style="left:676.60px;top:306.26px;font:400 12.8px/15px 'DejaVu Sans Mono','Liberation Mono',monospace;color:#24292e;"><span style="color:#d73a49">return</span> item;</div>
<div class="t" style="left:645.30px;top:306.51px;font:400 12.100000000000001px/15px 'DejaVu Sans Mono','Liberation Mono',monospace;color:#8c8f96;">3</div>
<div class="t" style="left:676.60px;top:325.96px;font:400 12.8px/15px 'DejaVu Sans Mono','Liberation Mono',monospace;color:#24292e;">});</div>
<div class="t" style="left:645.30px;top:326.21px;font:400 12.100000000000001px/15px 'DejaVu Sans Mono','Liberation Mono',monospace;color:#24292e;">4</div>
<div class="t" style="left:649.40px;top:381.67px;font:400 12.5px/15px 'Liberation Sans',sans-serif;color:#7b7d87;letter-spacing:0.073px;">Type</div>
<div class="t" style="left:680.30px;top:383.19px;font:400 11px/13px 'DejaVu Sans Mono','Liberation Mono',monospace;color:#666;">$</div>
<div class="t" style="left:691.20px;top:381.67px;font:400 12.5px/15px 'Liberation Sans',sans-serif;color:#7b7d87;letter-spacing:0.118px;">for a list of</div>
<div class="t" style="left:754.50px;top:381.67px;font:700 12.5px/15px 'Liberation Sans',sans-serif;color:#ff6d5a;letter-spacing:-0.148px;">special vars/methods</div>
<div class="t" style="left:880.40px;top:381.67px;font:400 12.5px/15px 'Liberation Sans',sans-serif;color:#7b7d87;letter-spacing:-0.013px;">. Debug by using</div>
<div class="t" style="left:978.80px;top:383.29px;font:400 10.7px/13px 'DejaVu Sans Mono','Liberation Mono',monospace;color:#666;letter-spacing:0.065px;">console.log()</div>
<div class="t" style="left:1068.30px;top:381.67px;font:400 12.5px/15px 'Liberation Sans',sans-serif;color:#7b7d87;letter-spacing:0.099px;">statements and viewing their</div>
<div class="t" style="left:649.10px;top:397.37px;font:400 12.5px/15px 'Liberation Sans',sans-serif;color:#7b7d87;letter-spacing:0.181px;">output in the browser console.</div>
<div class="t" style="left:46.00px;top:-4.38px;font:700 11.5px/14px 'Liberation Sans',sans-serif;color:#4f4d5b;letter-spacing:0.949px;">n8n</div>
</div>
</body>
</html>
